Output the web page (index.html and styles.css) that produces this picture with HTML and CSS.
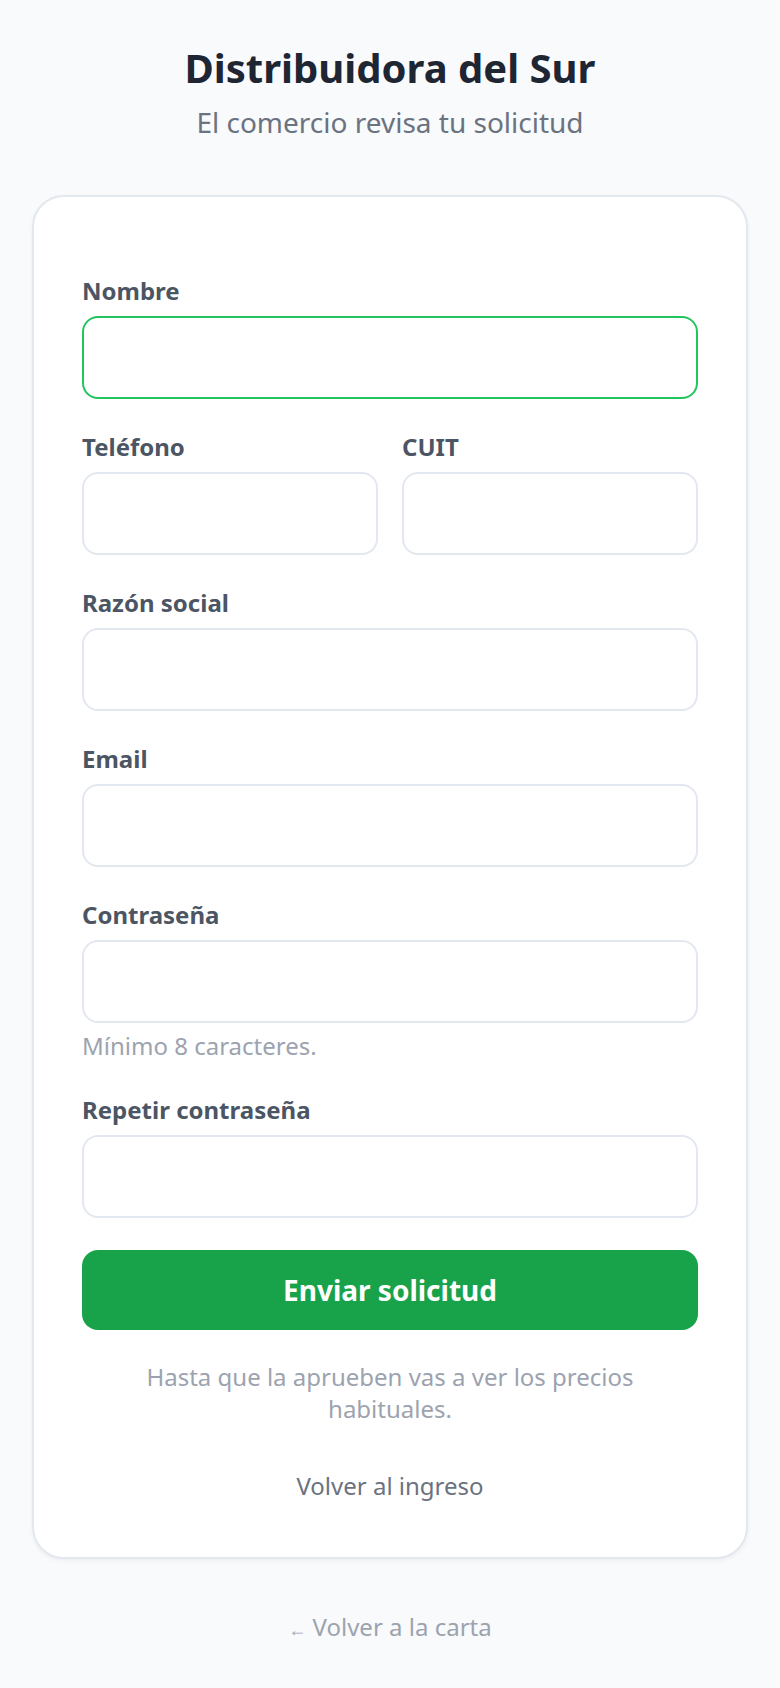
FILE: index.html
```html
<!DOCTYPE html>
<html lang="es">
<head>
<meta charset="utf-8">
<title>Distribuidora del Sur</title>
<link rel="stylesheet" href="styles.css">
</head>
<body>
<header class="header">
  <h1 class="title">Distribuidora del Sur</h1>
  <p class="subtitle">El comercio revisa tu solicitud</p>
</header>
<main class="card">
  <form class="form">
    <div class="field">
      <label class="label">Nombre</label>
      <div class="input input-focus"></div>
    </div>
    <div class="row">
      <div class="field">
        <label class="label">Teléfono</label>
        <div class="input"></div>
      </div>
      <div class="field">
        <label class="label">CUIT</label>
        <div class="input"></div>
      </div>
    </div>
    <div class="field">
      <label class="label">Razón social</label>
      <div class="input"></div>
    </div>
    <div class="field">
      <label class="label">Email</label>
      <div class="input"></div>
    </div>
    <div class="field">
      <label class="label">Contraseña</label>
      <div class="input"></div>
      <p class="hint">Mínimo 8 caracteres.</p>
    </div>
    <div class="field">
      <label class="label">Repetir contraseña</label>
      <div class="input"></div>
    </div>
    <button type="button" class="submit">Enviar solicitud</button>
  </form>
  <p class="note">Hasta que la aprueben vas a ver los precios habituales.</p>
  <p class="login-link">Volver al ingreso</p>
</main>
<p class="back-link"><span class="arrow">←</span> Volver a la carta</p>
</body>
</html>
```

FILE: styles.css
```css
* { box-sizing: border-box; }

html, body {
  margin: 0;
  padding: 0;
}

body {
  background: #f8fafc;
  font-family: "Noto Sans", "Open Sans", sans-serif;
  color: #1f2937;
  min-height: 1688px;
}

.header {
  padding-top: 40px;
  margin-bottom: 53px;
  text-align: center;
}

.title {
  margin: 0;
  font-size: 40px;
  line-height: 56px;
  font-weight: 700;
  color: #1e2533;
}

.subtitle {
  margin: 6px 0 0;
  font-size: 28px;
  line-height: 40px;
  color: #6b7280;
}

.card {
  margin: 0 32px;
  background: #ffffff;
  border: 2px solid #e3e8ef;
  border-radius: 32px;
  padding: 78px 48px 55px;
  box-shadow: 0 2px 4px rgba(15, 23, 42, 0.05);
}

.form {
  margin: 0;
}

.field {
  margin-bottom: 32px;
}

.row {
  display: grid;
  grid-template-columns: 1fr 1fr;
  column-gap: 24px;
}

.label {
  display: block;
  font-size: 24px;
  line-height: 32px;
  font-weight: 700;
  color: #4b5563;
  margin-bottom: 9px;
}

.input {
  height: 83px;
  border: 2px solid #e3e8f0;
  border-radius: 16px;
  background: #ffffff;
}

.input-focus {
  border-color: #22c55e;
}

.hint {
  margin: 7px 0 0;
  font-size: 24px;
  line-height: 32px;
  color: #9ca3af;
}

.submit {
  display: block;
  width: 100%;
  height: 80px;
  margin-top: 2px;
  border: none;
  border-radius: 16px;
  background: #18a34a;
  color: #ffffff;
  font-family: "Noto Sans", "Open Sans", sans-serif;
  font-size: 28px;
  font-weight: 700;
  line-height: 40px;
  cursor: pointer;
}

.note {
  margin: 31px 0 0;
  padding: 0 24px;
  text-align: center;
  font-size: 24px;
  line-height: 32px;
  color: #9ca3af;
}

.login-link {
  margin: 45px 0 0;
  text-align: center;
  font-size: 24px;
  line-height: 32px;
  color: #6b7280;
}

.back-link {
  margin: 52px 0 0;
  text-align: center;
  font-size: 24px;
  line-height: 32px;
  color: #9ca3af;
}

.arrow {
  font-size: 18px;
}
```
